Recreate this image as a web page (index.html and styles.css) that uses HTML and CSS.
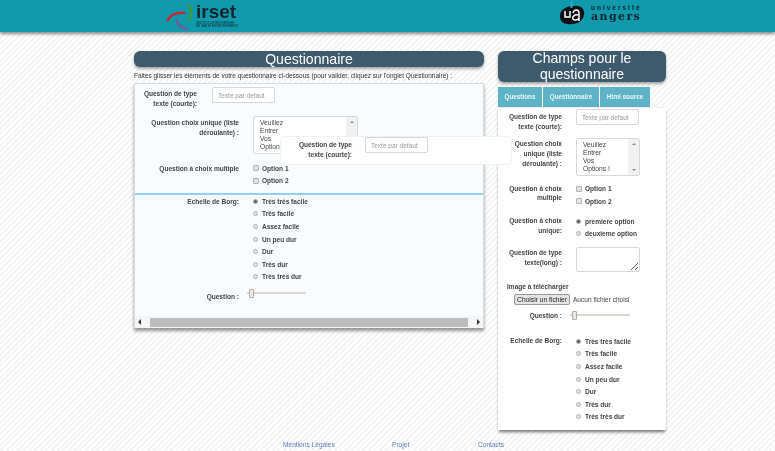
FILE: index.html
```html
<!DOCTYPE html>
<html lang="fr">
<head>
<meta charset="utf-8">
<title>Questionnaire</title>
<link rel="stylesheet" href="styles.css">
</head>
<body>
<header class="site-header">
  <div class="logo-irset">
    <svg class="irset-mark" width="28" height="28" viewBox="0 0 28 28">
      <path d="M22 2 C26 7 26 14 22 19" fill="none" stroke="#3f9a3c" stroke-width="2.4"/>
      <path d="M1 19 C4 13 10 10 19 11" fill="none" stroke="#c4272f" stroke-width="2.6"/>
      <path d="M10 17 C12 23 16 27 22 27" fill="none" stroke="#6f5c96" stroke-width="2.4"/>
    </svg>
    <div class="irset-text">
      <div class="irset-name">irset</div>
      <div class="irset-sub">INSTITUT DE RECHERCHE<br>EN SANTÉ ENVIRONNEMENT</div>
    </div>
  </div>
  <div class="logo-angers">
    <svg class="ua-mark" width="26" height="25" viewBox="0 0 26 25">
      <path d="M1 15 C1 8 8 5 15 5 C22 4 26 8 25 14 C24 21 16 24 9 23 C4 23 1 20 1 15 Z" fill="#0d0f14"/>
      <path d="M11.500 0 L13.500 0 L13.500 7 L11.500 7 Z" fill="#2aa7d8"/>
      <path d="M6 10 V16 H11 V10" fill="none" stroke="#fff" stroke-width="1.500"/>
      <path d="M14 12 C15 8 20 8 20 12 V20 M20 14 C15 13 13 16 14 18 C15 20 19 19 20 17" fill="none" stroke="#fff" stroke-width="1.500"/>
    </svg>
    <div class="angers-text">
      <div class="angers-top">université</div>
      <div class="angers-name">angers</div>
    </div>
  </div>
</header>

<main class="layout">
  <section class="col-left">
    <h1 class="title">Questionnaire</h1>
    <p class="intro">Faites glisser les éléments de votre questionnaire ci-dessous (pour valider, cliquez sur l'onglet Questionnaire) :</p>
    <div class="drop-panel">
      <div class="drop-body">
        <div class="row row-first">
          <label class="lbl">Question de type<br>texte (courte):</label>
          <input class="txt" type="text" placeholder="Texte par defaut">
        </div>
        <div class="row row-select">
          <label class="lbl">Question choix unique (liste déroulante) :</label>
          <div class="listbox">
            <select class="sel" size="4">
              <option>Veuillez</option><option>Entrer</option><option>Vos</option><option>Options !</option>
            </select>
            <div class="vbar"><span class="vup"></span><span class="vdown"></span></div>
          </div>
        </div>
        <div class="row row-multi">
          <label class="lbl">Question à choix multiple</label>
          <div class="opts">
            <label class="opt"><input type="checkbox">Option 1</label>
            <label class="opt"><input type="checkbox">Option 2</label>
          </div>
        </div>
        <div class="row row-borg">
          <label class="lbl">Echelle de Borg:</label>
          <div class="opts">
            <label class="opt"><input type="radio" name="b1" checked>Très très facile</label>
            <label class="opt"><input type="radio" name="b1">Très facile</label>
            <label class="opt"><input type="radio" name="b1">Assez facile</label>
            <label class="opt"><input type="radio" name="b1">Un peu dur</label>
            <label class="opt"><input type="radio" name="b1">Dur</label>
            <label class="opt"><input type="radio" name="b1">Très dur</label>
            <label class="opt"><input type="radio" name="b1">Très très dur</label>
          </div>
        </div>
        <div class="row row-range">
          <label class="lbl">Question :</label>
          <input class="range" type="range" min="0" max="100" value="0">
        </div>
      </div>
      <div class="hscroll">
        <span class="arrow arrow-left"></span>
        <span class="thumb"></span>
        <span class="arrow arrow-right"></span>
      </div>
      <div class="ghost">
        <label class="lbl">Question de type<br>texte (courte):</label>
        <input class="txt" type="text" placeholder="Texte par defaut">
      </div>
    </div>
  </section>

  <aside class="col-right">
    <h2 class="title title-side">Champs pour le questionnaire</h2>
    <nav class="tabs">
      <a class="tab tab-q">Questions</a>
      <a class="tab tab-m">Questionnaire</a>
      <a class="tab tab-h">Html source</a>
    </nav>
    <div class="fields">
      <div class="frow frow-text">
        <label class="lbl">Question de type texte (courte):</label>
        <input class="txt" type="text" placeholder="Texte par defaut">
      </div>
      <div class="frow frow-select">
        <label class="lbl">Question choix unique (liste déroulante) :</label>
        <div class="listbox">
          <select class="sel" size="4">
            <option>Veuillez</option><option>Entrer</option><option>Vos</option><option>Options !</option>
          </select>
          <div class="vbar"><span class="vup"></span><span class="vdown"></span></div>
        </div>
      </div>
      <div class="frow frow-multi">
        <label class="lbl">Question à choix multiple</label>
        <div class="opts">
          <label class="opt"><input type="checkbox">Option 1</label>
          <label class="opt"><input type="checkbox">Option 2</label>
        </div>
      </div>
      <div class="frow frow-unique">
        <label class="lbl">Question à choix unique:</label>
        <div class="opts">
          <label class="opt"><input type="radio" name="u" checked>premiere option</label>
          <label class="opt"><input type="radio" name="u">deuxieme option</label>
        </div>
      </div>
      <div class="frow frow-long">
        <label class="lbl">Question de type texte(long) :</label>
        <textarea class="area"></textarea>
      </div>
      <div class="upload">
        <div class="upload-label">Image à télécharger</div>
        <div class="upload-line"><button class="file-btn" type="button">Choisir un fichier</button><span>Aucun fichier choisi</span></div>
      </div>
      <div class="frow frow-range">
        <label class="lbl">Question :</label>
        <input class="range" type="range" min="0" max="100" value="0">
      </div>
      <div class="frow frow-borg">
        <label class="lbl">Echelle de Borg:</label>
        <div class="opts">
          <label class="opt"><input type="radio" name="b2" checked>Très très facile</label>
          <label class="opt"><input type="radio" name="b2">Très facile</label>
          <label class="opt"><input type="radio" name="b2">Assez facile</label>
          <label class="opt"><input type="radio" name="b2">Un peu dur</label>
          <label class="opt"><input type="radio" name="b2">Dur</label>
          <label class="opt"><input type="radio" name="b2">Très dur</label>
          <label class="opt"><input type="radio" name="b2">Très très dur</label>
        </div>
      </div>
    </div>
  </aside>
</main>

<footer class="foot">
  <a class="foot-a">Mentions Légales</a>
  <a class="foot-b">Projet</a>
  <a class="foot-c">Contacts</a>
</footer>
</body>
</html>
```
FILE: styles.css
```css
* { box-sizing: border-box; }
html, body { margin: 0; height: 451px; overflow: hidden; }
body {
  font-family: "Liberation Sans", Arial, sans-serif;
  font-size: 6.550px;
  color: #333;
  background: repeating-linear-gradient(135deg, #fff 0, #fff 2px, #f4f4f4 2px, #f4f4f4 4px);
}
.site-header, .layout, .foot { filter: blur(.35px); }

.site-header {
  height: 32px;
  display: flex;
  padding-left: 166px;
  background: repeating-linear-gradient(135deg, #0f9aae 0, #0f9aae 2px, #1199ab 2px, #1199ab 4px);
  box-shadow: 0 2px 3px rgba(0,0,0,.45);
}
.logo-irset { display: flex; width: 393px; }
.irset-mark { margin-top: 2px; flex: none; }
.irset-text { margin-left: 2px; color: #17262c; }
.irset-name { font-size: 19px; font-weight: 700; line-height: 21px; margin-top: 1px; }
.irset-sub { font-size: 3px; line-height: 3px; white-space: nowrap; }
.logo-angers { display: flex; }
.ua-mark { flex: none; margin-top: 1px; }
.angers-text { margin-left: 6px; color: #12222c; }
.angers-top { font-size: 6.500px; line-height: 7px; margin-top: 4px; letter-spacing: 2px; font-weight: 700; white-space: nowrap; }
.angers-name { font-family: "DejaVu Serif", serif; font-weight: 700; font-size: 11px; line-height: 11px; letter-spacing: 1.400px; }

.layout { display: flex; gap: 14px; padding: 19px 0 0 134px; align-items: flex-start; }
.col-left { width: 350px; position: relative; z-index: 2; }
.col-right { width: 168px; }

.title {
  margin: 0;
  background: #3e5a6d;
  color: #fff;
  font-weight: 400;
  text-align: center;
  border-radius: 6px;
  box-shadow: 0 2px 3px rgba(0,0,0,.35);
}
.col-left .title { height: 16px; font-size: 14.100px; line-height: 16px; }
.title-side { height: 31px; font-size: 14px; line-height: 15.500px; }

.intro { margin: 0; padding-top: 3.500px; height: 16px; font-size: 6.500px; line-height: 9px; white-space: nowrap; }

.drop-panel {
  position: relative;
  height: 245px;
  background: #f8fcff;
  border: 1px solid #d5dde2;
  border-bottom: 0;
  box-shadow: 0 3px 3px rgba(0,0,0,.4);
}
.drop-body { height: 232px; }

.lbl { font-weight: 700; line-height: 9.800px; text-align: right; color: #444; display: block; }
.txt {
  width: 63px; height: 16px; padding: 0 5px;
  font: 6.500px "Liberation Sans", Arial, sans-serif;
  border: 1px solid #d8d8d8; border-radius: 2px; background: #fff; outline: 0;
}
.txt::placeholder { color: #999; }

.listbox { display: flex; height: 38px; border: 1px solid #d8d8d8; border-radius: 2px; background: #fff; overflow: hidden; }
.sel {
  flex: 1; min-width: 0; height: 36px; padding: 1.500px 0 0 6px;
  font: 6.700px/8px "Liberation Sans", Arial, sans-serif;
  border: 0; background: #fff; color: #444; outline: 0;
}
.sel option { padding: 0; min-height: 8px; height: 8px; line-height: 8px; }
.vbar { width: 11px; flex: none; background: #f1f1f1; display: flex; flex-direction: column; justify-content: space-between; align-items: center; padding: 4px 0; }
.vup, .vdown { width: 0; height: 0; border: 2.500px solid transparent; }
.vup { border-bottom-color: #8a8a8a; border-top-width: 0; }
.vdown { border-top-color: #8a8a8a; border-bottom-width: 0; }

.opts { display: flex; flex-direction: column; }
.opt { display: flex; align-items: center; height: 12.600px; font-weight: 700; color: #444; white-space: nowrap; }
.opt input {
  appearance: none; -webkit-appearance: none;
  width: 5px; height: 5px; margin: 0 4px 0 0; flex: none;
  background: #e2e2e2; border: 1px solid #b3b3b3;
}
.opt input[type="radio"] { border-radius: 50%; }
.opt input[type="checkbox"] { width: 6px; height: 6px; margin-right: 3px; border-radius: 1px; }
.opt input:checked { background: #666; border-color: #aaa; }

.range { appearance: none; -webkit-appearance: none; height: 2px; background: #ddd8d2; margin: 0; padding-left: 2px; outline: 0; }
.range::-webkit-slider-thumb {
  -webkit-appearance: none; appearance: none;
  width: 5px; height: 9px; background: #eee9e4; border: 1px solid #b5aea6; border-radius: 1px;
}

.row { display: grid; grid-template-columns: 104px 1fr; column-gap: 14px; }
.row-first { grid-template-columns: 62px 1fr; column-gap: 15px; height: 30px; }
.row-first .lbl { width: 62px; padding-top: 5px; }
.row-first .txt { margin-top: 3px; }
.row-select { height: 46px; padding-top: 2px; }
.row-select .lbl { padding-top: 2px; padding-left: 14px; }
.row-select .listbox { width: 105px; }
.row-multi { height: 33px; padding-top: 2px; }
.row-multi .lbl { padding-top: 1.500px; }
.row-borg { height: 96px; padding-top: 0; border-top: 2px solid #8fd0f5; }
.row-borg .lbl { padding-top: 2px; }
.row-range { grid-template-columns: 104px 59px; column-gap: 8px; padding-top: 3px; }
.row-range .range { margin-top: 0; width: 59px; }

.hscroll { height: 12px; display: flex; align-items: center; background: #f5f5f5; }
.thumb { flex: 1; height: 9px; background: #bdbdbd; margin: 0 3px; }
.arrow { width: 12px; height: 12px; position: relative; flex: none; }
.arrow::before { content: ""; position: absolute; top: 3px; border: 3px solid transparent; }
.arrow-left::before { left: 0; border-right-color: #333; }
.arrow-right::before { right: 0; border-left-color: #333; }

.ghost {
  position: absolute;
  left: 145px; top: 52px;
  width: 232px; height: 29px;
  display: flex;
  background: rgba(255,255,255,.95);
  border: 1px solid #f0f0f0;
  border-radius: 4px;
}
.ghost .lbl { width: 71px; padding-top: 3px; }
.ghost .txt { margin-left: 13px; margin-top: 0; }

.tabs { display: flex; gap: 1px; margin-top: 5px; height: 20px; }
.tab { background: #5fb3c6; color: #eaf7fa; font-weight: 700; font-size: 6.300px; line-height: 20px; text-align: center; }
.tab-q { width: 44px; }
.tab-m { width: 56px; }
.tab-h { width: 50px; }

.fields {
  height: 323px;
  background: #fff;
  border-top: 1px solid #eee;
  box-shadow: 0 3px 3px -1px rgba(0,0,0,.55);
}
.frow { display: grid; grid-template-columns: 57px 64px; column-gap: 14px; padding-left: 7px; }
.frow-text { height: 30px; padding-top: 1px; }
.frow-text .lbl { padding-top: 3px; }
.frow-select { height: 43px; }
.frow-select .lbl { padding-top: 1px; }
.frow-select .listbox { width: 64px; }
.frow-multi { height: 33px; padding-top: 1.500px; }
.frow-multi .lbl { padding-top: 1px; }
.frow-unique { height: 32px; padding-top: 1px; }
.frow-unique .lbl { padding-top: 1px; }
.frow-long { height: 36px; padding-top: 1px; }
.frow-long .lbl { padding-top: 1px; }
.area { width: 64px; height: 25px; border: 1px solid #d8d8d8; border-radius: 2px; margin: 0; padding: 0; background: #fff; outline: 0; }

.upload { padding-left: 9px; height: 29px; color: #444; }
.upload-label { font-weight: 700; line-height: 9px; }
.upload-line { display: flex; align-items: center; margin: 2.500px 0 0 7px; white-space: nowrap; }
.file-btn {
  width: 56px; height: 11px; padding: 0; margin-right: 3px;
  font: 6.700px "Liberation Sans", Arial, sans-serif; color: #222;
  background: #e4e4e4; border: 1px solid #999; border-radius: 2px;
}
.frow-range { grid-template-columns: 57px 60px; column-gap: 8px; height: 22px; }
.frow-range .lbl { padding-top: 0; }
.frow-range .range { width: 60px; margin-top: 3px; }
.frow-borg { padding-top: 2px; }
.frow-borg .lbl { padding-top: 1px; }

.foot { height: 20px; padding-top: 10px; font-size: 6.600px; line-height: 9px; color: #5d7fb8; display: flex; padding-left: 283px; }
.foot-a { width: 109px; }
.foot-b { width: 86px; }
```
